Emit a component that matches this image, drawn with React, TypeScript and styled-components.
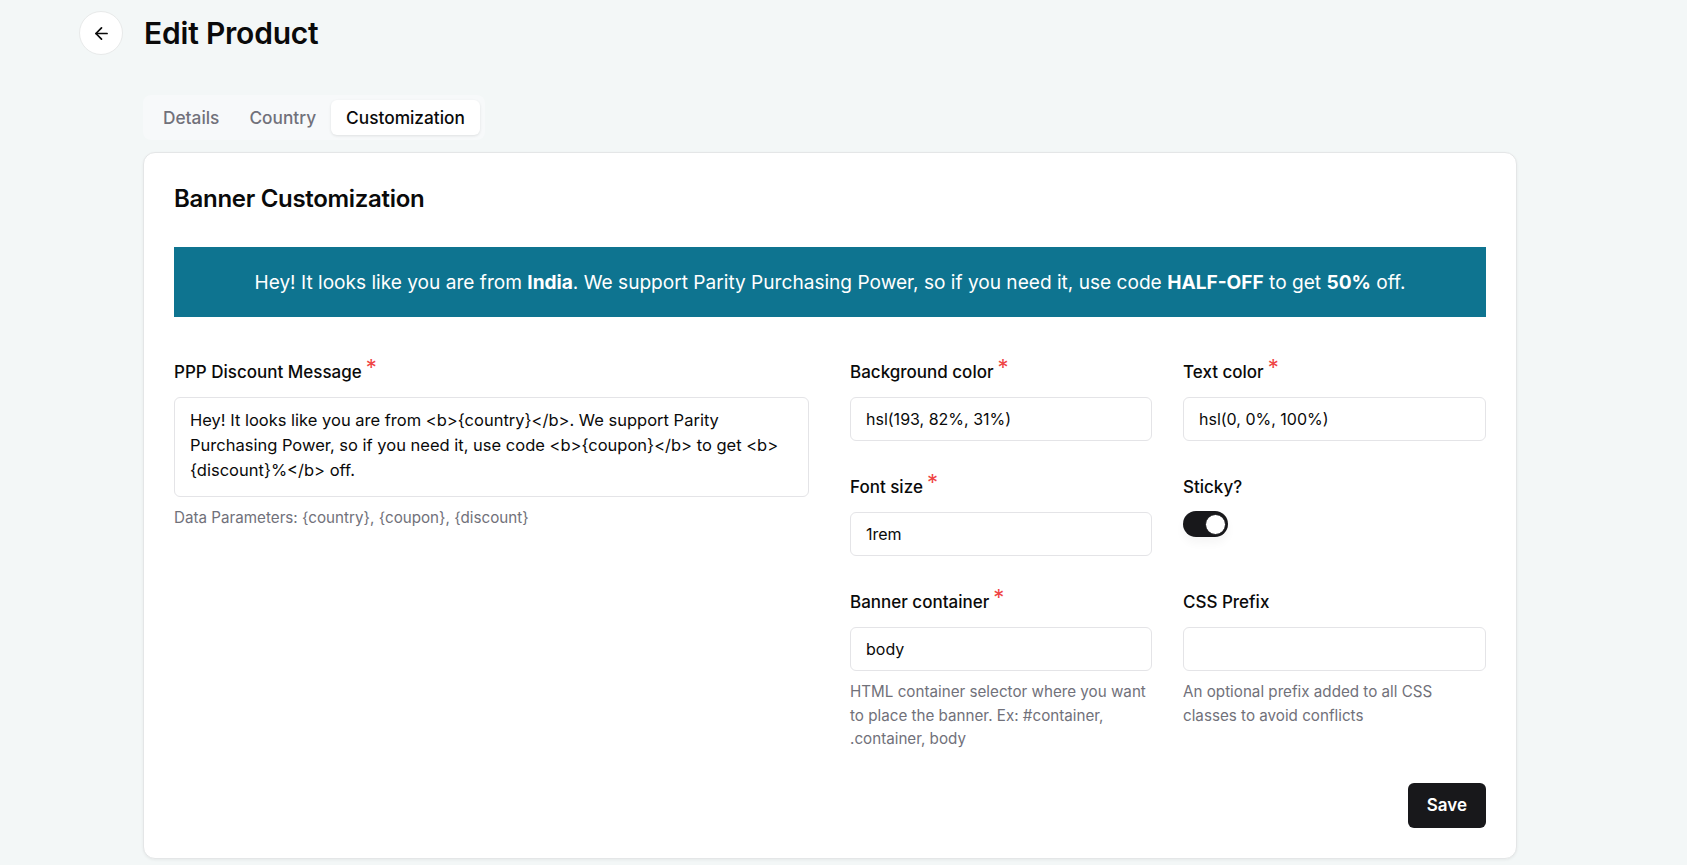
import React from "react";
import styled, { createGlobalStyle } from "styled-components";

const Global = createGlobalStyle`
  html, body { margin: 0; padding: 0; }
  body {
    background: #f3f7f7;
    font-family: Inter, "Noto Sans", "Liberation Sans", sans-serif;
    color: #0a0a0a;
  }
  * { box-sizing: border-box; }
`;

const Page = styled.div`
  padding: 11px 0 7px 79px;
  width: 1517px;
`;

const Header = styled.header`
  display: flex;
  align-items: center;
  gap: 21px;
`;

const BackButton = styled.button`
  width: 44px;
  height: 44px;
  border-radius: 50%;
  border: 1px solid #e8eaea;
  background: #ffffff;
  display: flex;
  align-items: center;
  justify-content: center;
  padding: 0;
  color: #0a0a0a;
  cursor: pointer;
`;

const Title = styled.h1`
  margin: 0;
  font-size: 30px;
  font-weight: 600;
  letter-spacing: -0.2px;
`;

const Body = styled.div`
  margin-left: 64px;
  margin-top: 40px;
  display: flex;
  flex-direction: column;
  gap: 12px;
`;

const TabList = styled.div`
  display: inline-flex;
  align-self: flex-start;
  align-items: center;
  background: #f7f9fa;
  border-radius: 8px;
  padding: 5px;
  height: 45px;
`;

const Tab = styled.button<{ $active?: boolean }>`
  border: none;
  font-family: inherit;
  font-size: 17.3px;
  font-weight: 500;
  height: 35px;
  padding: 0 15px;
  border-radius: 6px;
  background: ${(p) => (p.$active ? "#ffffff" : "transparent")};
  color: ${(p) => (p.$active ? "#0a0a0a" : "#71717a")};
  box-shadow: ${(p) => (p.$active ? "0 1px 3px rgba(0,0,0,0.1)" : "none")};
`;

const Card = styled.section`
  background: #ffffff;
  border: 1px solid #e4e6e7;
  border-radius: 12px;
  box-shadow: 0 1px 3px rgba(0, 0, 0, 0.06);
  padding: 30px 30px 30px 30px;
  width: 1374px;
`;

const CardTitle = styled.h2`
  margin: 0;
  font-size: 24px;
  font-weight: 600;
  line-height: 32px;
  letter-spacing: -0.3px;
`;

const Banner = styled.div`
  margin-top: 32px;
  height: 70px;
  background: hsl(193, 82%, 31%);
  color: hsl(0, 0%, 100%);
  font-size: 19.1px;
  display: flex;
  align-items: center;
  justify-content: center;
  b { font-weight: 700; }
`;

const FormGrid = styled.div`
  margin-top: 45px;
  display: grid;
  grid-template-columns: 635px 636px;
  column-gap: 41px;
`;

const LeftCol = styled.div`
  display: flex;
  flex-direction: column;
`;

const RightGrid = styled.div`
  display: grid;
  grid-template-columns: 302px 303px;
  column-gap: 31px;
  row-gap: 36px;
  align-items: start;
`;

const Field = styled.div`
  display: flex;
  flex-direction: column;
`;

const Label = styled.label`
  font-size: 17px;
  font-weight: 500;
  line-height: 20px;
  margin-bottom: 15px;
  display: flex;
  align-items: flex-start;
`;

const Required = styled.span`
  color: #ef4444;
  font-size: 22px;
  font-weight: 400;
  line-height: 22px;
  height: 14px;
  margin-left: 4px;
  margin-top: -6px;
`;

const Input = styled.input`
  height: 44px;
  border: 1px solid #e4e4e7;
  border-radius: 6px;
  padding: 0 15px;
  font-family: inherit;
  font-size: 16px;
  color: #0a0a0a;
  background: #ffffff;
  width: 100%;
  outline: none;
`;

const TextArea = styled.textarea`
  height: 100px;
  border: 1px solid #e4e4e7;
  border-radius: 6px;
  padding: 10px 15px;
  font-family: inherit;
  font-size: 16.5px;
  line-height: 25px;
  color: #0a0a0a;
  background: #ffffff;
  resize: none;
  width: 100%;
  outline: none;
`;

const Help = styled.p`
  margin: 9px 0 0;
  font-size: 15.2px;
  line-height: 23.5px;
  color: #71717a;
`;

const SwitchTrack = styled.button<{ $on?: boolean }>`
  width: 45px;
  height: 26px;
  border-radius: 13px;
  border: 2px solid transparent;
  background: ${(p) => (p.$on ? "#18181b" : "#e4e4e7")};
  padding: 0;
  display: flex;
  align-items: center;
  justify-content: ${(p) => (p.$on ? "flex-end" : "flex-start")};
  box-shadow: 0 6px 10px rgba(0, 0, 0, 0.04);
  margin-top: -1px;
`;

const SwitchThumb = styled.span`
  width: 21px;
  height: 21px;
  border-radius: 50%;
  background: #ffffff;
  border: 1px solid #18181b;
`;

const Footer = styled.div`
  display: flex;
  justify-content: flex-end;
  margin-top: 32px;
`;

const SaveButton = styled.button`
  height: 45px;
  padding: 0 19px;
  border: none;
  border-radius: 6px;
  background: #18181b;
  color: #ffffff;
  font-family: inherit;
  font-size: 17px;
  font-weight: 600;
`;

const message =
  "Hey! It looks like you are from <b>{country}</b>. We support Parity Purchasing Power, so if you need it, use code <b>{coupon}</b> to get <b>{discount}%</b> off.";

function ReqLabel({ text, required }: { text: string; required?: boolean }) {
  return (
    <Label>
      {text}
      {required && <Required>*</Required>}
    </Label>
  );
}

export default function App() {
  return (
    <>
      <Global />
      <Page>
        <Header>
          <BackButton aria-label="Back">
            <svg width="19" height="19" viewBox="0 0 24 24" fill="none" stroke="currentColor" strokeWidth="2.2" strokeLinecap="round" strokeLinejoin="round">
              <path d="m12 19-7-7 7-7" />
              <path d="M19 12H5" />
            </svg>
          </BackButton>
          <Title>Edit Product</Title>
        </Header>
        <Body>
          <TabList>
            <Tab>Details</Tab>
            <Tab>Country</Tab>
            <Tab $active>Customization</Tab>
          </TabList>
          <Card>
            <CardTitle>Banner Customization</CardTitle>
            <Banner>
              <span>
                Hey! It looks like you are from <b>India</b>. We support Parity Purchasing Power, so if you need it, use code <b>HALF-OFF</b> to get <b>50%</b> off.
              </span>
            </Banner>
            <FormGrid>
              <LeftCol>
                <ReqLabel text="PPP Discount Message" required />
                <TextArea defaultValue={message} />
                <Help>Data Parameters: {"{country}, {coupon}, {discount}"}</Help>
              </LeftCol>
              <RightGrid>
                <Field>
                  <ReqLabel text="Background color" required />
                  <Input defaultValue="hsl(193, 82%, 31%)" />
                </Field>
                <Field>
                  <ReqLabel text="Text color" required />
                  <Input defaultValue="hsl(0, 0%, 100%)" />
                </Field>
                <Field>
                  <ReqLabel text="Font size" required />
                  <Input defaultValue="1rem" />
                </Field>
                <Field>
                  <ReqLabel text="Sticky?" />
                  <SwitchTrack $on aria-label="Sticky">
                    <SwitchThumb />
                  </SwitchTrack>
                </Field>
                <Field>
                  <ReqLabel text="Banner container" required />
                  <Input defaultValue="body" />
                  <Help>HTML container selector where you want to place the banner. Ex: #container, .container, body</Help>
                </Field>
                <Field>
                  <ReqLabel text="CSS Prefix" />
                  <Input defaultValue="" />
                  <Help>An optional prefix added to all CSS classes to avoid conflicts</Help>
                </Field>
              </RightGrid>
            </FormGrid>
            <Footer>
              <SaveButton>Save</SaveButton>
            </Footer>
          </Card>
        </Body>
      </Page>
    </>
  );
}
